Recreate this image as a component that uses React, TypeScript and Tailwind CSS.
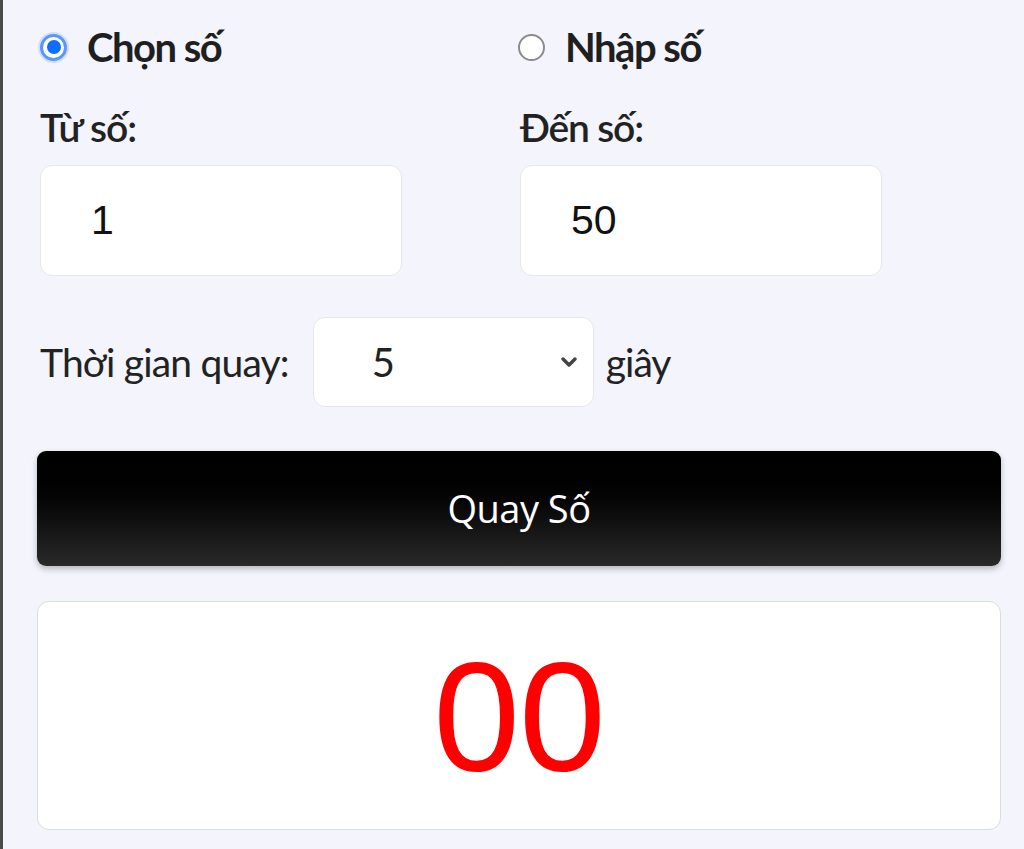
import { ChevronDown } from "lucide-react";

const Radio = ({ checked, label }: { checked?: boolean; label: string }) => (
  <label className="flex items-center gap-[20px]">
    {checked ? (
      <span className="w-[27px] h-[27px] rounded-full border-[3px] border-[#5b97f8] bg-white flex items-center justify-center shadow-[0_0_0_2px_#cfe0fd]">
        <span className="w-[14px] h-[14px] rounded-full bg-[#0d6efd]" />
      </span>
    ) : (
      <span className="w-[27px] h-[27px] rounded-full border-[2px] border-[#8b8b8b] bg-white" />
    )}
    <span className="text-[40px] font-bold tracking-[-1.5px] text-[#1f1f1f] leading-none">
      {label}
    </span>
  </label>
);

const NumberBox = ({ value }: { value: string }) => (
  <div className="w-[362px] h-[111px] bg-white rounded-[12px] border border-[#e6e7ee] flex items-center pl-[50px]">
    <span className="font-['Liberation_Sans',sans-serif] text-[41px] text-[#111]">
      {value}
    </span>
  </div>
);

export default function App() {
  return (
    <div className="min-h-[849px] bg-[#f3f4fc] border-l-[3px] border-[#4a4a4a] font-['Lato',sans-serif] pl-[34px] pr-[23px] pt-[26px]">
      <div className="grid grid-cols-[480px_1fr] pl-[3px]">
        <div className="h-[42px] flex items-center">
          <Radio checked label="Chọn số" />
        </div>
        <div className="h-[42px] flex items-center -ml-[2px]">
          <Radio label="Nhập số" />
        </div>
      </div>

      <div className="grid grid-cols-[480px_1fr] pl-[3px] mt-[40px]">
        <div>
          <div className="text-[39px] font-semibold tracking-[-1px] text-[#222] leading-none">
            Từ số:
          </div>
          <div className="mt-[18px]">
            <NumberBox value="1" />
          </div>
        </div>
        <div>
          <div className="text-[39px] font-semibold tracking-[-1.2px] text-[#222] leading-none">
            Đến số:
          </div>
          <div className="mt-[18px]">
            <NumberBox value="50" />
          </div>
        </div>
      </div>

      <div className="flex items-center pl-[3px] mt-[41px] h-[90px]">
        <span className="text-[39px] tracking-[-0.8px] text-[#222]">Thời gian quay:</span>
        <div className="ml-[24px] w-[281px] h-[90px] bg-white rounded-[12px] border border-[#e6e7ee] flex items-center pl-[58px] pr-[12px]">
          <span className="text-[40px] text-[#222] flex-1">5</span>
          <ChevronDown className="w-[24px] h-[24px] text-[#444]" strokeWidth={3.5} />
        </div>
        <span className="ml-[12px] text-[39px] tracking-[-1px] text-[#222]">giây</span>
      </div>

      <button className="mt-[44px] w-[964px] h-[115px] rounded-[9px] bg-gradient-to-b from-[#000] to-[#2a2a2a] shadow-[0_3px_6px_rgba(0,0,0,0.25)] flex items-center justify-center">
        <span className="font-['Open_Sans',sans-serif] text-[38px] font-medium text-white tracking-[-0.5px]">
          Quay Số
        </span>
      </button>

      <div className="mt-[35px] w-[964px] h-[229px] bg-white rounded-[12px] border border-[#d3e0dc] flex items-center justify-center">
        <span className="font-['Liberation_Sans',sans-serif] text-[156px] leading-none text-[#ff0000] tracking-[-1px]">
          00
        </span>
      </div>
    </div>
  );
}
